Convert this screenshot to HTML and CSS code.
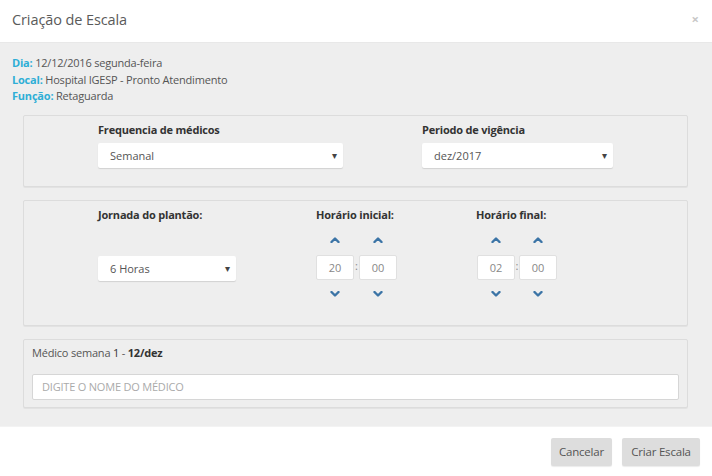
FILE: index.html
```html
<!DOCTYPE html>
<html lang="pt">
<head>
<meta charset="utf-8">
<title>Criação de Escala</title>
<link rel="stylesheet" href="styles.css">
</head>
<body>
<div class="modal">
  <div class="modal-header">
    <span class="modal-title">Criação de Escala</span>
    <span class="close">×</span>
  </div>
  <div class="modal-body">
    <div class="info">
      <div><span class="key">Dia:</span> 12/12/2016 segunda-feira</div>
      <div><span class="key">Local:</span> Hospital IGESP - Pronto Atendimento</div>
      <div><span class="key">Função:</span> Retaguarda</div>
    </div>

    <div class="panel panel-freq">
      <div class="field">
        <div class="label">Frequencia de médicos</div>
        <div class="select w-freq"><span>Semanal</span><span class="caret">▾</span></div>
      </div>
      <div class="field">
        <div class="label">Periodo de vigência</div>
        <div class="select w-per"><span>dez/2017</span><span class="caret">▾</span></div>
      </div>
    </div>

    <div class="panel panel-time">
      <div class="field">
        <div class="label">Jornada do plantão:</div>
        <div class="select w-jor"><span>6 Horas</span><span class="caret">▾</span></div>
      </div>
      <div class="field">
        <div class="label">Horário inicial:</div>
        <div class="timepicker">
          <div class="spin">
            <svg class="chev" viewBox="0 0 10 6"><polyline points="1.5,5 5,1.5 8.5,5"/></svg>
            <div class="tbox">20</div>
            <svg class="chev" viewBox="0 0 10 6"><polyline points="1.5,1 5,4.5 8.5,1"/></svg>
          </div>
          <span class="colon">:</span>
          <div class="spin">
            <svg class="chev" viewBox="0 0 10 6"><polyline points="1.5,5 5,1.5 8.5,5"/></svg>
            <div class="tbox">00</div>
            <svg class="chev" viewBox="0 0 10 6"><polyline points="1.5,1 5,4.5 8.5,1"/></svg>
          </div>
        </div>
      </div>
      <div class="field">
        <div class="label">Horário final:</div>
        <div class="timepicker tp-final">
          <div class="spin">
            <svg class="chev" viewBox="0 0 10 6"><polyline points="1.5,5 5,1.5 8.5,5"/></svg>
            <div class="tbox">02</div>
            <svg class="chev" viewBox="0 0 10 6"><polyline points="1.5,1 5,4.5 8.5,1"/></svg>
          </div>
          <span class="colon">:</span>
          <div class="spin">
            <svg class="chev" viewBox="0 0 10 6"><polyline points="1.5,5 5,1.5 8.5,5"/></svg>
            <div class="tbox">00</div>
            <svg class="chev" viewBox="0 0 10 6"><polyline points="1.5,1 5,4.5 8.5,1"/></svg>
          </div>
        </div>
      </div>
    </div>

    <div class="panel panel-med">
      <div class="med-label">Médico semana <span class="num">1</span> - <b>12/dez</b></div>
      <div class="text-input">DIGITE O NOME DO MÉDICO</div>
    </div>
  </div>
  <div class="modal-footer">
    <button class="btn">Cancelar</button>
    <button class="btn">Criar Escala</button>
  </div>
</div>
</body>
</html>
```

FILE: styles.css
```css
* { box-sizing: border-box; }
html, body { margin: 0; padding: 0; background: #fff; }
body {
  font-family: "Open Sans", "Noto Sans", sans-serif;
  color: #555;
  font-size: 11px;
  width: 712px;
  height: 476px;
  overflow: hidden;
}
.modal { width: 712px; }
.modal-header {
  height: 43px;
  display: flex;
  align-items: center;
  justify-content: space-between;
  padding: 0 13px 4px 12px;
  border-bottom: 1px solid #e8e8e8;
}
.modal-title {
  font-size: 14.5px;
  color: #5a5a5a;
  letter-spacing: -0.1px;
}
.close {
  color: #c8c8c8;
  font-size: 13px;
  font-weight: bold;
}
.modal-body {
  background: #eee;
  padding: 12px 12px 18px 12px;
}
.info {
  line-height: 16.5px;
  letter-spacing: -0.2px;
  color: #555;
}
.key { color: #2eaed6; font-weight: bold; }

.panel {
  margin: 0 12px 0 11px;
  border: 1px solid #dcdcdc;
  border-radius: 2px;
  background: #eee;
  box-shadow: 0 1px 0 #e2e2e2;
}
.panel-freq {
  margin-top: 10px;
  height: 72px;
  display: grid;
  grid-template-columns: 245px 191px;
  column-gap: 79px;
  padding: 6px 0 0 74px;
}
.label {
  font-weight: bold;
  color: #333;
  line-height: 16px;
  letter-spacing: -0.2px;
}
.select {
  margin-top: 5px;
  height: 25px;
  background: #fff;
  border-radius: 2px;
  box-shadow: 0 1px 1px rgba(0,0,0,0.12);
  display: flex;
  align-items: center;
  justify-content: space-between;
  padding: 0 6px 0 12px;
  color: #555;
}
.caret { font-size: 10px; color: #444; }
.w-freq { width: 245px; }
.w-per { width: 191px; }
.w-jor { width: 138px; margin-top: 33px; }

.panel-time {
  margin-top: 13px;
  height: 126px;
  display: grid;
  grid-template-columns: 218px 160px auto;
  padding: 6px 0 0 74px;
}
.timepicker {
  display: flex;
  align-items: flex-start;
  margin-top: 8px;
}
.tp-final { margin-left: 1px; }
.spin {
  display: flex;
  flex-direction: column;
  align-items: center;
  width: 38px;
}
.chev {
  width: 10px;
  height: 6px;
  fill: none;
  stroke: #3b74a6;
  stroke-width: 2.4;
  stroke-linecap: round;
  stroke-linejoin: round;
}
.spin .chev:first-child { margin: 6px 0 12px; }
.spin .chev:last-child { margin: 11px 0 0; }
.tbox {
  width: 38px;
  height: 25px;
  background: #fff;
  border: 1px solid #e0e0e0;
  border-radius: 2px;
  display: flex;
  align-items: center;
  justify-content: center;
  color: #888;
}
.colon {
  width: 5px;
  text-align: center;
  margin-top: 28px;
  line-height: 14px;
  color: #888;
}
.tp-final .colon { width: 4px; }

.panel-med {
  margin-top: 13px;
  height: 69px;
  padding: 5px 8px 0 8px;
}
.med-label {
  line-height: 16px;
  color: #555;
  letter-spacing: -0.2px;
}
.med-label .num { color: #333; }
.med-label b { color: #333; }
.text-input {
  margin-top: 13px;
  height: 26px;
  background: #fff;
  border: 1px solid #d6d6d6;
  border-radius: 2px;
  display: flex;
  align-items: center;
  padding-left: 9px;
  color: #aaa;
  letter-spacing: -0.2px;
}

.modal-footer {
  display: flex;
  justify-content: flex-end;
  gap: 10px;
  padding: 11px 12px 0 0;
  border-top: 1px solid #f3f3f3;
}
.btn {
  font-family: "Open Sans", "Noto Sans", sans-serif;
  font-size: 11.5px;
  color: #555;
  background: #ddd;
  border: none;
  border-radius: 2px;
  height: 28px;
  padding: 0;
  box-shadow: 0 1px 1px rgba(0,0,0,0.08);
  letter-spacing: -0.2px;
}
.btn:first-child { width: 61px; }
.btn:last-child { width: 78px; }
```
